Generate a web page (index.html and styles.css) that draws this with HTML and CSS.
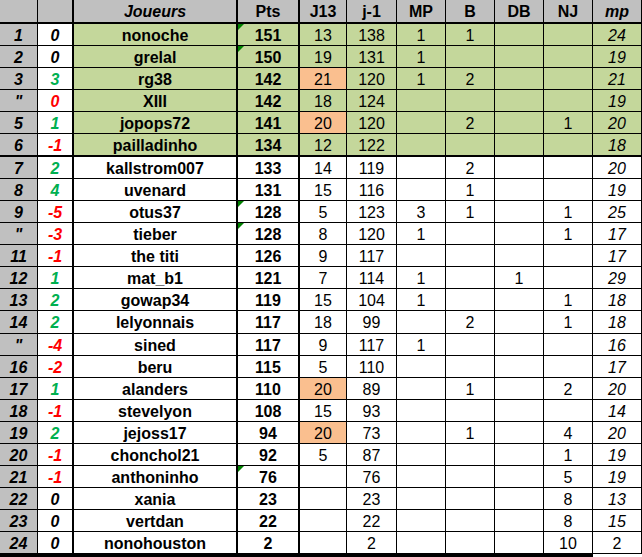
FILE: index.html
```html
<!DOCTYPE html>
<html lang="fr">
<head>
<meta charset="utf-8">
<title>Classement</title>
<link rel="stylesheet" href="styles.css">
</head>
<body>
<div class="sheet">
  <div class="row head">
    <div class="cell rank"></div><div class="cell chg"></div><div class="cell name it">Joueurs</div><div class="cell pts">Pts</div><div class="cell hd">J13</div><div class="cell hd">j-1</div><div class="cell hd">MP</div><div class="cell hd">B</div><div class="cell hd">DB</div><div class="cell hd">NJ</div><div class="cell hd it">mp</div>
  </div>
  <div class="row top">
    <div class="cell rank">1</div><div class="cell chg">0</div><div class="cell name">nonoche</div><div class="cell pts flag">151</div><div class="cell num">13</div><div class="cell num">138</div><div class="cell num">1</div><div class="cell num">1</div><div class="cell num"></div><div class="cell num"></div><div class="cell avg">24</div>
  </div>
  <div class="row top">
    <div class="cell rank">2</div><div class="cell chg">0</div><div class="cell name">grelal</div><div class="cell pts flag">150</div><div class="cell num">19</div><div class="cell num">131</div><div class="cell num">1</div><div class="cell num"></div><div class="cell num"></div><div class="cell num"></div><div class="cell avg">19</div>
  </div>
  <div class="row top">
    <div class="cell rank">3</div><div class="cell chg up">3</div><div class="cell name">rg38</div><div class="cell pts">142</div><div class="cell num hot">21</div><div class="cell num">120</div><div class="cell num">1</div><div class="cell num">2</div><div class="cell num"></div><div class="cell num"></div><div class="cell avg">21</div>
  </div>
  <div class="row top">
    <div class="cell rank">"</div><div class="cell chg down">0</div><div class="cell name">XIII</div><div class="cell pts">142</div><div class="cell num">18</div><div class="cell num">124</div><div class="cell num"></div><div class="cell num"></div><div class="cell num"></div><div class="cell num"></div><div class="cell avg">19</div>
  </div>
  <div class="row top">
    <div class="cell rank">5</div><div class="cell chg up">1</div><div class="cell name">jopops72</div><div class="cell pts">141</div><div class="cell num hot">20</div><div class="cell num">120</div><div class="cell num"></div><div class="cell num">2</div><div class="cell num"></div><div class="cell num">1</div><div class="cell avg">20</div>
  </div>
  <div class="row top sep">
    <div class="cell rank">6</div><div class="cell chg down">-1</div><div class="cell name">pailladinho</div><div class="cell pts">134</div><div class="cell num">12</div><div class="cell num">122</div><div class="cell num"></div><div class="cell num"></div><div class="cell num"></div><div class="cell num"></div><div class="cell avg">18</div>
  </div>
  <div class="row">
    <div class="cell rank">7</div><div class="cell chg up">2</div><div class="cell name">kallstrom007</div><div class="cell pts">133</div><div class="cell num">14</div><div class="cell num">119</div><div class="cell num"></div><div class="cell num">2</div><div class="cell num"></div><div class="cell num"></div><div class="cell avg">20</div>
  </div>
  <div class="row">
    <div class="cell rank">8</div><div class="cell chg up">4</div><div class="cell name">uvenard</div><div class="cell pts">131</div><div class="cell num">15</div><div class="cell num">116</div><div class="cell num"></div><div class="cell num">1</div><div class="cell num"></div><div class="cell num"></div><div class="cell avg">19</div>
  </div>
  <div class="row">
    <div class="cell rank">9</div><div class="cell chg down">-5</div><div class="cell name">otus37</div><div class="cell pts flag">128</div><div class="cell num">5</div><div class="cell num">123</div><div class="cell num">3</div><div class="cell num">1</div><div class="cell num"></div><div class="cell num">1</div><div class="cell avg">25</div>
  </div>
  <div class="row">
    <div class="cell rank">"</div><div class="cell chg down">-3</div><div class="cell name">tieber</div><div class="cell pts flag">128</div><div class="cell num">8</div><div class="cell num">120</div><div class="cell num">1</div><div class="cell num"></div><div class="cell num"></div><div class="cell num">1</div><div class="cell avg">17</div>
  </div>
  <div class="row">
    <div class="cell rank">11</div><div class="cell chg down">-1</div><div class="cell name">the titi</div><div class="cell pts">126</div><div class="cell num">9</div><div class="cell num">117</div><div class="cell num"></div><div class="cell num"></div><div class="cell num"></div><div class="cell num"></div><div class="cell avg">17</div>
  </div>
  <div class="row">
    <div class="cell rank">12</div><div class="cell chg up">1</div><div class="cell name">mat_b1</div><div class="cell pts">121</div><div class="cell num">7</div><div class="cell num">114</div><div class="cell num">1</div><div class="cell num"></div><div class="cell num">1</div><div class="cell num"></div><div class="cell avg">29</div>
  </div>
  <div class="row">
    <div class="cell rank">13</div><div class="cell chg up">2</div><div class="cell name">gowap34</div><div class="cell pts">119</div><div class="cell num">15</div><div class="cell num">104</div><div class="cell num">1</div><div class="cell num"></div><div class="cell num"></div><div class="cell num">1</div><div class="cell avg">18</div>
  </div>
  <div class="row tall">
    <div class="cell rank">14</div><div class="cell chg up">2</div><div class="cell name">lelyonnais</div><div class="cell pts">117</div><div class="cell num">18</div><div class="cell num">99</div><div class="cell num"></div><div class="cell num">2</div><div class="cell num"></div><div class="cell num">1</div><div class="cell avg">18</div>
  </div>
  <div class="row">
    <div class="cell rank">"</div><div class="cell chg down">-4</div><div class="cell name">sined</div><div class="cell pts">117</div><div class="cell num">9</div><div class="cell num">117</div><div class="cell num">1</div><div class="cell num"></div><div class="cell num"></div><div class="cell num"></div><div class="cell avg">16</div>
  </div>
  <div class="row">
    <div class="cell rank">16</div><div class="cell chg down">-2</div><div class="cell name">beru</div><div class="cell pts">115</div><div class="cell num">5</div><div class="cell num">110</div><div class="cell num"></div><div class="cell num"></div><div class="cell num"></div><div class="cell num"></div><div class="cell avg">17</div>
  </div>
  <div class="row">
    <div class="cell rank">17</div><div class="cell chg up">1</div><div class="cell name">alanders</div><div class="cell pts">110</div><div class="cell num hot">20</div><div class="cell num">89</div><div class="cell num"></div><div class="cell num">1</div><div class="cell num"></div><div class="cell num">2</div><div class="cell avg">20</div>
  </div>
  <div class="row">
    <div class="cell rank">18</div><div class="cell chg down">-1</div><div class="cell name">stevelyon</div><div class="cell pts">108</div><div class="cell num">15</div><div class="cell num">93</div><div class="cell num"></div><div class="cell num"></div><div class="cell num"></div><div class="cell num"></div><div class="cell avg">14</div>
  </div>
  <div class="row">
    <div class="cell rank">19</div><div class="cell chg up">2</div><div class="cell name">jejoss17</div><div class="cell pts">94</div><div class="cell num hot">20</div><div class="cell num">73</div><div class="cell num"></div><div class="cell num">1</div><div class="cell num"></div><div class="cell num">4</div><div class="cell avg">20</div>
  </div>
  <div class="row">
    <div class="cell rank">20</div><div class="cell chg down">-1</div><div class="cell name">chonchol21</div><div class="cell pts">92</div><div class="cell num">5</div><div class="cell num">87</div><div class="cell num"></div><div class="cell num"></div><div class="cell num"></div><div class="cell num">1</div><div class="cell avg">19</div>
  </div>
  <div class="row">
    <div class="cell rank">21</div><div class="cell chg down">-1</div><div class="cell name">anthoninho</div><div class="cell pts flag">76</div><div class="cell num"></div><div class="cell num">76</div><div class="cell num"></div><div class="cell num"></div><div class="cell num"></div><div class="cell num">5</div><div class="cell avg">19</div>
  </div>
  <div class="row">
    <div class="cell rank">22</div><div class="cell chg">0</div><div class="cell name">xania</div><div class="cell pts">23</div><div class="cell num"></div><div class="cell num">23</div><div class="cell num"></div><div class="cell num"></div><div class="cell num"></div><div class="cell num">8</div><div class="cell avg">13</div>
  </div>
  <div class="row">
    <div class="cell rank">23</div><div class="cell chg">0</div><div class="cell name">vertdan</div><div class="cell pts">22</div><div class="cell num"></div><div class="cell num">22</div><div class="cell num"></div><div class="cell num"></div><div class="cell num"></div><div class="cell num">8</div><div class="cell avg">15</div>
  </div>
  <div class="row last">
    <div class="cell rank">24</div><div class="cell chg">0</div><div class="cell name">nonohouston</div><div class="cell pts">2</div><div class="cell num"></div><div class="cell num">2</div><div class="cell num"></div><div class="cell num"></div><div class="cell num"></div><div class="cell num">10</div><div class="cell avg plain">2</div>
  </div>
</div>
</body>
</html>
```
FILE: styles.css
```css
html, body {
  margin: 0;
  padding: 0;
  background: #ffffff;
}

.sheet {
  width: 642px;
  font-family: "Liberation Sans", Arial, sans-serif;
  font-size: 16px;
  color: #000000;
}

.row {
  display: grid;
  grid-template-columns: 38px 36px 164px 62px 47px 50px 49px 49px 49px 49px 49px;
  height: 22px;
}

.row.head { height: 24px; }
.row.sep { height: 23px; }
.row.tall { height: 23px; }
.row.last { height: 25px; }

.cell {
  box-sizing: border-box;
  border-right: 1px solid #000;
  border-bottom: 1px solid #000;
  display: flex;
  align-items: center;
  justify-content: center;
  position: relative;
  white-space: nowrap;
  line-height: 1;
  padding-top: 2px;
}

.head .cell {
  background: #c0c0c0;
  border-bottom-width: 2px;
  font-weight: bold;
  padding-top: 1px;
}

.sep .cell { border-bottom-width: 2px; }
.last .cell { border-bottom-width: 4px; }

.last .cell.avg {
  border-bottom-width: 1px;
  height: 22px;
  align-self: start;
}

.rank {
  background: #c0c0c0;
  font-weight: bold;
  font-style: italic;
}

.chg {
  border-right-width: 2px;
  font-weight: bold;
  font-style: italic;
}

.chg.up { color: #00b050; }
.chg.down { color: #ff0000; }

.name {
  border-right-width: 2px;
  font-weight: bold;
}

.pts {
  border-right-width: 2px;
  font-weight: bold;
}

.it { font-style: italic; }

.avg { font-style: italic; }
.avg.plain { font-style: normal; }

.top .name,
.top .pts,
.top .num,
.top .avg {
  background: #c4d79b;
}

.num.hot,
.top .num.hot {
  background: #fabf8f;
}

.flag::before {
  content: "";
  position: absolute;
  left: 0;
  top: 0;
  width: 0;
  height: 0;
  border-top: 6px solid #008000;
  border-right: 6px solid transparent;
}
```
